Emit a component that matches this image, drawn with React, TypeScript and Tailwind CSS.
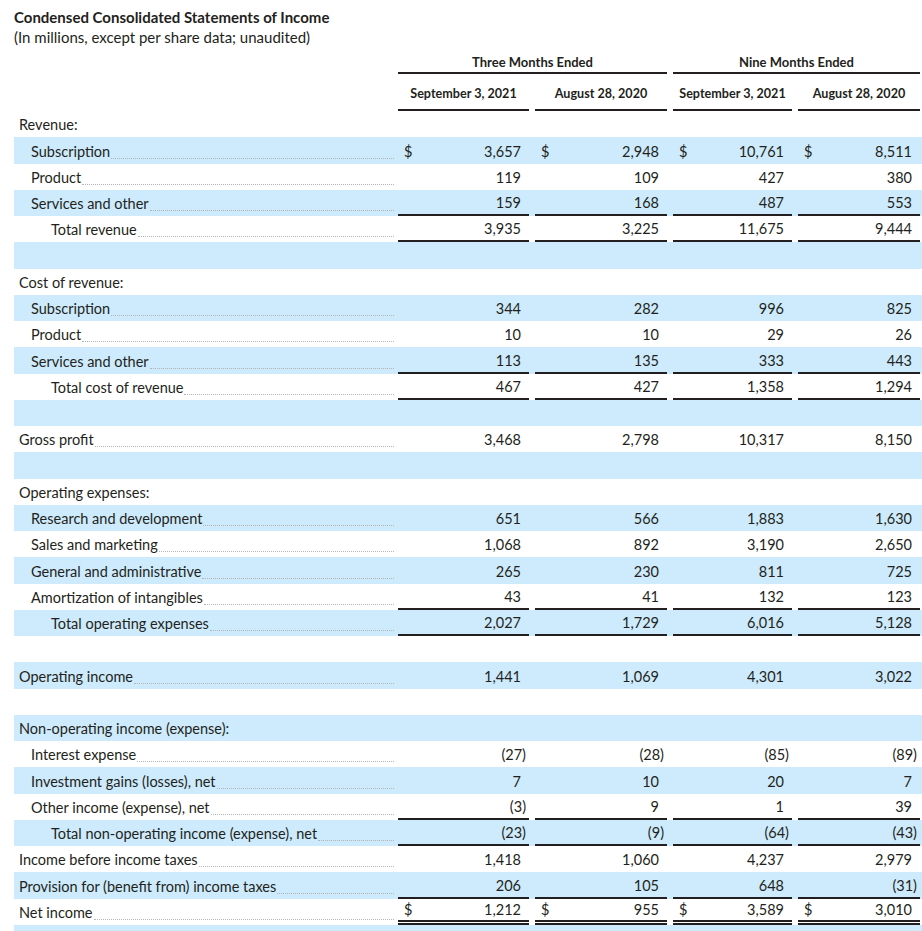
import type { ReactNode } from "react";

type Rule = "single" | "double";

interface Line {
  label?: string;
  indent?: 0 | 1 | 2;
  values?: [string, string, string, string];
  dollar?: boolean;
  rule?: Rule;
  heading?: boolean;
}

const ROWS: Line[] = [
  { label: "Revenue:", heading: true },
  { label: "Subscription", indent: 1, values: ["3,657", "2,948", "10,761", "8,511"], dollar: true },
  { label: "Product", indent: 1, values: ["119", "109", "427", "380"] },
  { label: "Services and other", indent: 1, values: ["159", "168", "487", "553"], rule: "single" },
  { label: "Total revenue", indent: 2, values: ["3,935", "3,225", "11,675", "9,444"], rule: "single" },
  {},
  { label: "Cost of revenue:", heading: true },
  { label: "Subscription", indent: 1, values: ["344", "282", "996", "825"] },
  { label: "Product", indent: 1, values: ["10", "10", "29", "26"] },
  { label: "Services and other", indent: 1, values: ["113", "135", "333", "443"], rule: "single" },
  { label: "Total cost of revenue", indent: 2, values: ["467", "427", "1,358", "1,294"], rule: "single" },
  {},
  { label: "Gross profit", values: ["3,468", "2,798", "10,317", "8,150"] },
  {},
  { label: "Operating expenses:", heading: true },
  { label: "Research and development", indent: 1, values: ["651", "566", "1,883", "1,630"] },
  { label: "Sales and marketing", indent: 1, values: ["1,068", "892", "3,190", "2,650"] },
  { label: "General and administrative", indent: 1, values: ["265", "230", "811", "725"] },
  { label: "Amortization of intangibles", indent: 1, values: ["43", "41", "132", "123"], rule: "single" },
  { label: "Total operating expenses", indent: 2, values: ["2,027", "1,729", "6,016", "5,128"], rule: "single" },
  {},
  { label: "Operating income", values: ["1,441", "1,069", "4,301", "3,022"] },
  {},
  { label: "Non-operating income (expense):", heading: true },
  { label: "Interest expense", indent: 1, values: ["(27)", "(28)", "(85)", "(89)"] },
  { label: "Investment gains (losses), net", indent: 1, values: ["7", "10", "20", "7"] },
  { label: "Other income (expense), net", indent: 1, values: ["(3)", "9", "1", "39"], rule: "single" },
  { label: "Total non-operating income (expense), net", indent: 2, values: ["(23)", "(9)", "(64)", "(43)"], rule: "single" },
  { label: "Income before income taxes", values: ["1,418", "1,060", "4,237", "2,979"] },
  { label: "Provision for (benefit from) income taxes", values: ["206", "105", "648", "(31)"], rule: "single" },
  { label: "Net income", values: ["1,212", "955", "3,589", "3,010"], dollar: true, rule: "double" },
  {},
];

// column widths in px, matched to the statement's rules
const COLS = ["w-[131px]", "w-[132px]", "w-[119px]", "w-[122px]"];
const INDENT = ["pl-[5px]", "pl-[17px]", "pl-[37px]"];

function Cell({ width, value, dollar, rule }: { width: string; value?: string; dollar?: boolean; rule?: Rule }) {
  const border =
    rule === "double"
      ? "border-b-[5px] border-double border-[#231f20]"
      : rule === "single"
        ? "border-b-2 border-[#231f20]"
        : "";
  const hangs = value?.endsWith(")");
  return (
    <div className={`${width} ${border} flex h-full items-center justify-between pt-[2px]`}>
      <span className="pl-[6px]">{dollar ? "$" : ""}</span>
      <span className={hangs ? "pr-[3px]" : "pr-[8px]"}>{value}</span>
    </div>
  );
}

function StatementRow({ row, shaded }: { row: Line; shaded: boolean }) {
  const hasLeader = !!row.label && !row.heading;
  return (
    <div className={`flex h-[26.25px] ${shaded ? "bg-[#cdebfc]" : ""}`}>
      <div className={`flex w-[384px] items-center pr-[4px] pt-[2px] ${INDENT[row.indent ?? 0]}`}>
        <span className="whitespace-nowrap">{row.label}</span>
        {hasLeader && <span className="mb-[5px] ml-[1px] flex-1 self-end border-b border-dotted border-[#b4b4b4]" />}
      </div>
      <div className="flex h-full gap-[6px]">
        {COLS.map((w, i) => (
          <Cell key={i} width={w} value={row.values?.[i]} dollar={row.dollar} rule={row.rule} />
        ))}
      </div>
    </div>
  );
}

function HeaderCell({ width, children, className = "" }: { width: string; children: ReactNode; className?: string }) {
  return (
    <div className={`${width} flex justify-center border-b-2 border-[#231f20] ${className}`}>
      {children}
    </div>
  );
}

export default function App() {
  return (
    <div
      className="min-h-[931px] w-[922px] bg-white pl-[14px] pt-[7px] text-[14.5px] text-[#231f20]"
      style={{ fontFamily: "Lato, 'Open Sans', sans-serif" }}
    >
      <h1 className="text-[15px] font-bold leading-[20px]">Condensed Consolidated Statements of Income</h1>
      <p className="text-[15px] leading-[20px]">(In millions, except per share data; unaudited)</p>

      <div className="mt-[3px] flex h-[24px] pl-[384px] text-[13px] font-bold">
        <HeaderCell width="w-[269px]" className="items-start pt-[3px]">Three Months Ended</HeaderCell>
        <HeaderCell width="ml-[6px] w-[247px]" className="items-start pt-[3px]">Nine Months Ended</HeaderCell>
      </div>
      <div className="flex h-[37px] gap-[6px] pl-[384px] text-[12.6px] font-bold">
        <HeaderCell width="w-[131px]" className="items-center pt-[5px]">September 3, 2021</HeaderCell>
        <HeaderCell width="w-[132px]" className="items-center pt-[5px]">August 28, 2020</HeaderCell>
        <HeaderCell width="w-[119px]" className="items-center pt-[5px]">September 3, 2021</HeaderCell>
        <HeaderCell width="w-[122px]" className="items-center pt-[5px]">August 28, 2020</HeaderCell>
      </div>

      <div>
        {ROWS.map((row, i) => (
          <StatementRow key={i} row={row} shaded={i % 2 === 1} />
        ))}
      </div>
    </div>
  );
}
